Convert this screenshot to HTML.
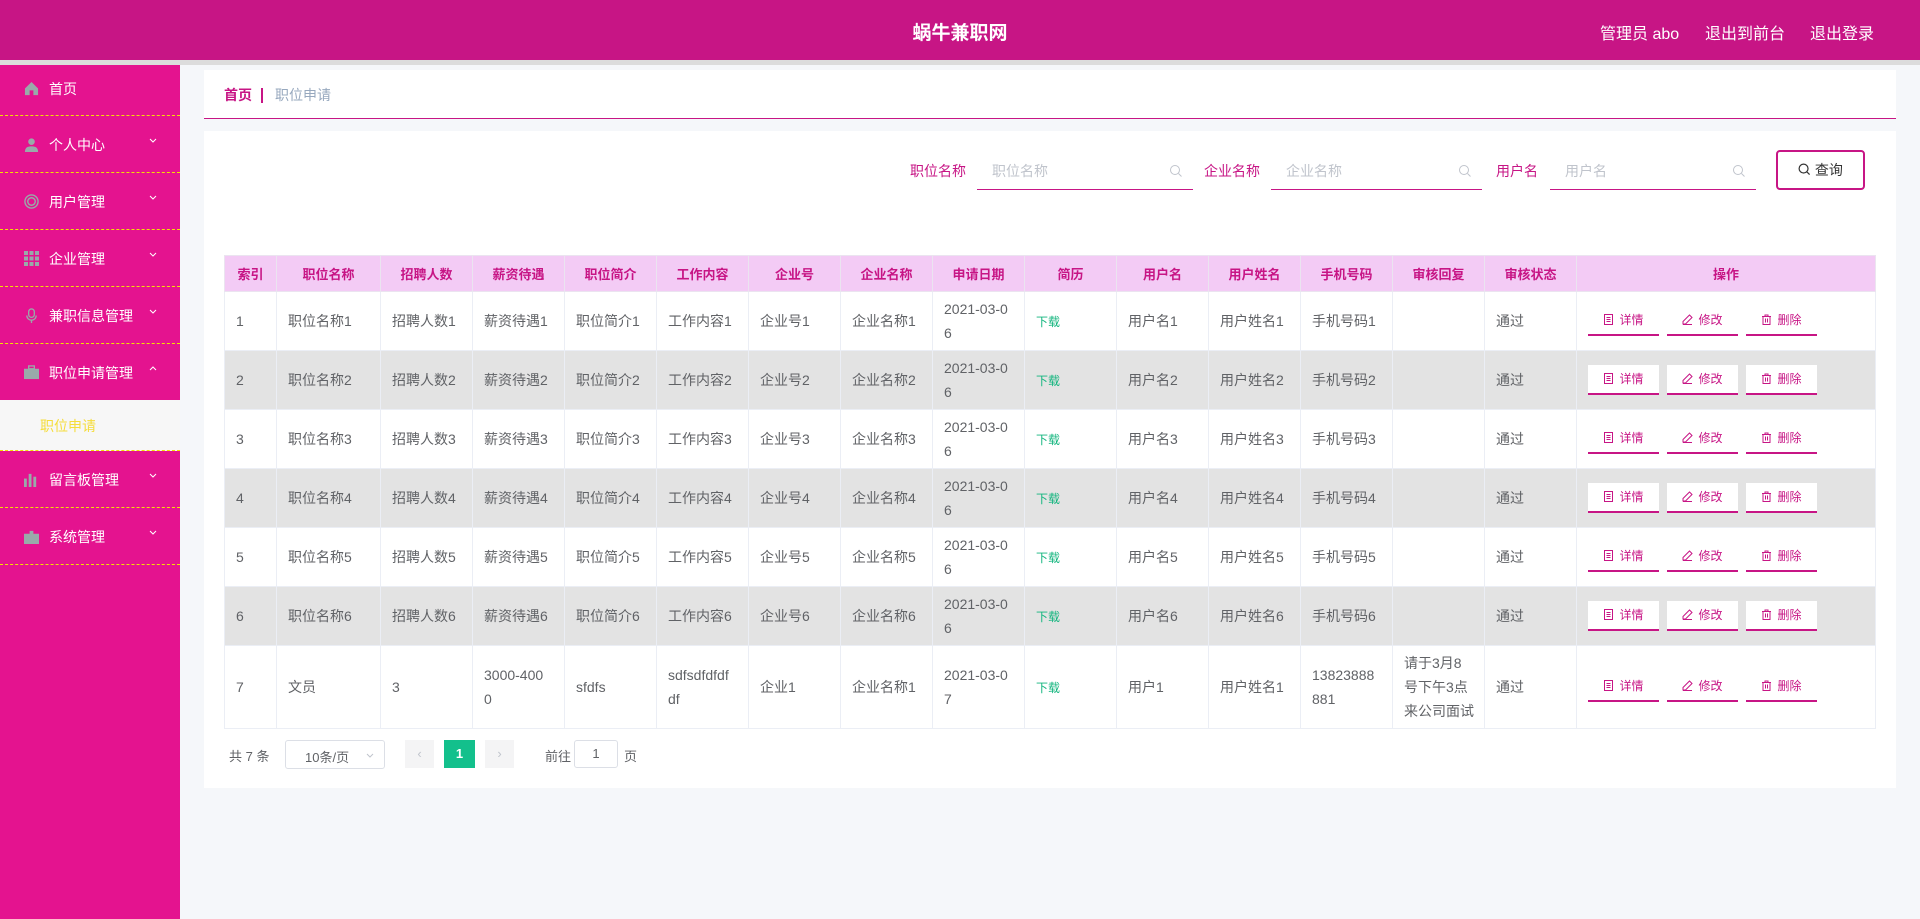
<!DOCTYPE html>
<html><head><meta charset="utf-8">
<style>
*{margin:0;padding:0;box-sizing:border-box}
body{width:1920px;height:919px;overflow:hidden;background:#f5f7fa;font-family:"Liberation Sans","Noto Sans CJK SC",sans-serif;position:relative;color:#606266}
.hdr{position:absolute;left:0;top:0;width:1920px;height:60px;background:#c71585;color:#fff}
.hdr .t{position:absolute;left:0;width:1920px;top:18px;text-align:center;font-size:19px;font-weight:bold}
.hdr .r{position:absolute;top:20px;font-size:16px}
.strip{position:absolute;left:0;top:60px;width:1920px;height:5px;background:#dcdcdc}
.side{position:absolute;left:0;top:65px;width:180px;height:854px;background:#e4138f}
.mi{position:absolute;left:0;width:180px;border-bottom:1px dashed #f5e000;color:#fff;font-size:14px}
.mi .ic{position:absolute;left:24px;width:15px;height:15px}
.mi .tx{position:absolute;left:49px}
.mi .ch{position:absolute;left:149px;width:8px;height:8px}
.sub{position:absolute;left:0;top:400px;width:180px;height:51px;background:#f7f7f7;border-bottom:1px dashed #f5e000;color:#f5dd3c;font-size:14px}
.crumb{position:absolute;left:204px;top:70px;width:1692px;height:49px;background:#fff;border-bottom:1px solid #c71585;font-size:14px}
.card{position:absolute;left:204px;top:131px;width:1692px;height:657px;background:#fff}
.lab{position:absolute;top:161px;font-size:14px;color:#c71585}
.inp{position:absolute;top:152px;height:38px;border-bottom:1px solid #c71585;font-size:14px;color:#c0c4cc;padding:9px 15px}
.inp svg{position:absolute;right:10px;top:12px}
.btn{position:absolute;left:1776px;top:150px;width:89px;height:40px;border:2px solid #c71585;border-radius:4px;font-size:14px;color:#333;text-align:center;line-height:36px}
table{position:absolute;left:224px;top:255px;width:1651px;border-collapse:collapse;table-layout:fixed;font-size:14px}
th{height:36px;background:#f3cbf5;color:#c71585;font-size:13px;font-weight:bold;border:1px solid #ebe4f0;text-align:center;padding:0}
td{border:1px solid #ebeef5;padding:5px 10px 5px 11px;line-height:24px;height:59px;white-space:nowrap;vertical-align:middle}
tr.g td{background:#e3e3e3}
tr.l td{height:82px}
.dl{color:#13b57e;font-size:12px}
.ob{display:inline-block;width:71px;height:30px;background:#fff;border-bottom:2px solid #c71585;color:#c71585;font-size:12px;text-align:center;line-height:28px;margin-right:8px;vertical-align:middle}
.ob svg{vertical-align:-1px;margin-right:5px}
.pg{position:absolute;top:740px;font-size:13px;color:#606266}
</style></head><body>
<div class="hdr"><div class="t">蜗牛兼职网</div>
<div class="r" style="left:1600px">管理员 abo</div>
<div class="r" style="left:1705px">退出到前台</div>
<div class="r" style="left:1810px">退出登录</div></div>
<div class="strip"></div>
<div class="side"></div>
<div class="mi" style="top:65px;height:51px"><svg class="ic" style="top:16px" viewBox="0 0 16 16"><path d="M8 1L1 8v7h5v-5h4v5h5V8z" fill="#9aa"/></svg><span class="tx" style="top:14px">首页</span></div>
<div class="mi" style="top:116px;height:57px"><svg class="ic" style="top:21px" viewBox="0 0 16 16"><circle cx="8" cy="5" r="3.5" fill="#9aa"/><path d="M1 16c0-5 3-6 7-6s7 1 7 6z" fill="#9aa"/></svg><span class="tx" style="top:19px">个人中心</span><svg class="ch" style="top:21px" viewBox="0 0 8 8"><path d="M1 2l3 3 3-3" stroke="#fff" fill="none"/></svg></div>
<div class="mi" style="top:173px;height:57px"><svg class="ic" style="top:21px" viewBox="0 0 16 16"><circle cx="8" cy="8" r="7" stroke="#9aa" stroke-width="1.5" fill="none"/><circle cx="8" cy="8" r="4" stroke="#9aa" stroke-width="1.5" fill="none"/></svg><span class="tx" style="top:19px">用户管理</span><svg class="ch" style="top:21px" viewBox="0 0 8 8"><path d="M1 2l3 3 3-3" stroke="#fff" fill="none"/></svg></div>
<div class="mi" style="top:230px;height:57px"><svg class="ic" style="top:21px" viewBox="0 0 15 15" fill="#9aa"><rect x="0" y="0" width="4" height="4"/><rect x="5.5" y="0" width="4" height="4"/><rect x="11" y="0" width="4" height="4"/><rect x="0" y="5.5" width="4" height="4"/><rect x="5.5" y="5.5" width="4" height="4"/><rect x="11" y="5.5" width="4" height="4"/><rect x="0" y="11" width="4" height="4"/><rect x="5.5" y="11" width="4" height="4"/><rect x="11" y="11" width="4" height="4"/></svg><span class="tx" style="top:19px">企业管理</span><svg class="ch" style="top:21px" viewBox="0 0 8 8"><path d="M1 2l3 3 3-3" stroke="#fff" fill="none"/></svg></div>
<div class="mi" style="top:287px;height:57px"><svg class="ic" style="top:21px" viewBox="0 0 16 16"><rect x="5" y="1" width="6" height="9" rx="3" stroke="#9aa" fill="none" stroke-width="1.4"/><path d="M3 8a5 5 0 0010 0M8 13v3" stroke="#9aa" fill="none" stroke-width="1.4"/></svg><span class="tx" style="top:19px">兼职信息管理</span><svg class="ch" style="top:21px" viewBox="0 0 8 8"><path d="M1 2l3 3 3-3" stroke="#fff" fill="none"/></svg></div>
<div class="mi" style="top:344px;height:56px;border-bottom:none"><svg class="ic" style="top:21px" viewBox="0 0 16 16" fill="#9aa"><rect x="5" y="1" width="6" height="3" fill="none" stroke="#9aa" stroke-width="1.4"/><rect x="0" y="4" width="16" height="11"/></svg><span class="tx" style="top:19px">职位申请管理</span><svg class="ch" style="top:21px" viewBox="0 0 8 8"><path d="M1 5l3-3 3 3" stroke="#fff" fill="none"/></svg></div>
<div class="sub"><span style="position:absolute;left:40px;top:16px">职位申请</span></div>
<div class="mi" style="top:451px;height:57px"><svg class="ic" style="top:21px" viewBox="0 0 16 16" fill="#9aa"><rect x="0" y="7" width="3" height="9"/><rect x="5" y="2" width="3" height="14"/><rect x="10" y="5" width="3" height="11"/></svg><span class="tx" style="top:19px">留言板管理</span><svg class="ch" style="top:21px" viewBox="0 0 8 8"><path d="M1 2l3 3 3-3" stroke="#fff" fill="none"/></svg></div>
<div class="mi" style="top:508px;height:57px"><svg class="ic" style="top:21px" viewBox="0 0 16 16" fill="#9aa"><path d="M0 5h6V2h4v3h6v11H0z"/></svg><span class="tx" style="top:19px">系统管理</span><svg class="ch" style="top:21px" viewBox="0 0 8 8"><path d="M1 2l3 3 3-3" stroke="#fff" fill="none"/></svg></div>

<div class="crumb"><span style="position:absolute;left:20px;top:15px;color:#c71585;font-weight:bold">首页</span><span style="position:absolute;left:57px;top:18px;width:2px;height:15px;background:#c71585"></span><span style="position:absolute;left:71px;top:15px;color:#97a8be">职位申请</span></div>
<div class="card"></div>
<div class="lab" style="left:910px">职位名称</div>
<div class="inp" style="left:977px;width:216px">职位名称<svg width="14" height="14" viewBox="0 0 14 14"><circle cx="6" cy="6" r="4.5" stroke="#c0c4cc" fill="none"/><path d="M9.5 9.5l3 3" stroke="#c0c4cc"/></svg></div>
<div class="lab" style="left:1204px">企业名称</div>
<div class="inp" style="left:1271px;width:211px">企业名称<svg width="14" height="14" viewBox="0 0 14 14"><circle cx="6" cy="6" r="4.5" stroke="#c0c4cc" fill="none"/><path d="M9.5 9.5l3 3" stroke="#c0c4cc"/></svg></div>
<div class="lab" style="left:1496px">用户名</div>
<div class="inp" style="left:1550px;width:206px">用户名<svg width="14" height="14" viewBox="0 0 14 14"><circle cx="6" cy="6" r="4.5" stroke="#c0c4cc" fill="none"/><path d="M9.5 9.5l3 3" stroke="#c0c4cc"/></svg></div>
<div class="btn"><svg width="13" height="13" viewBox="0 0 14 14" style="vertical-align:-1px"><circle cx="6" cy="6" r="4.8" stroke="#333" fill="none" stroke-width="1.3"/><path d="M9.5 9.5l3 3" stroke="#333" stroke-width="1.3"/></svg> 查询</div>

<table>
<colgroup><col style="width:52px"><col style="width:104px"><col style="width:92px"><col style="width:92px"><col style="width:92px"><col style="width:92px"><col style="width:92px"><col style="width:92px"><col style="width:92px"><col style="width:92px"><col style="width:92px"><col style="width:92px"><col style="width:92px"><col style="width:92px"><col style="width:92px"><col style="width:299px"></colgroup>
<tr><th>索引</th><th>职位名称</th><th>招聘人数</th><th>薪资待遇</th><th>职位简介</th><th>工作内容</th><th>企业号</th><th>企业名称</th><th>申请日期</th><th>简历</th><th>用户名</th><th>用户姓名</th><th>手机号码</th><th>审核回复</th><th>审核状态</th><th>操作</th></tr>
<tr><td>1</td><td>职位名称1</td><td>招聘人数1</td><td>薪资待遇1</td><td>职位简介1</td><td>工作内容1</td><td>企业号1</td><td>企业名称1</td><td>2021-03-0<br>6</td><td><span class="dl">下载</span></td><td>用户名1</td><td>用户姓名1</td><td>手机号码1</td><td></td><td>通过</td><td class="op"></td></tr>
<tr class="g"><td>2</td><td>职位名称2</td><td>招聘人数2</td><td>薪资待遇2</td><td>职位简介2</td><td>工作内容2</td><td>企业号2</td><td>企业名称2</td><td>2021-03-0<br>6</td><td><span class="dl">下载</span></td><td>用户名2</td><td>用户姓名2</td><td>手机号码2</td><td></td><td>通过</td><td class="op"></td></tr>
<tr><td>3</td><td>职位名称3</td><td>招聘人数3</td><td>薪资待遇3</td><td>职位简介3</td><td>工作内容3</td><td>企业号3</td><td>企业名称3</td><td>2021-03-0<br>6</td><td><span class="dl">下载</span></td><td>用户名3</td><td>用户姓名3</td><td>手机号码3</td><td></td><td>通过</td><td class="op"></td></tr>
<tr class="g"><td>4</td><td>职位名称4</td><td>招聘人数4</td><td>薪资待遇4</td><td>职位简介4</td><td>工作内容4</td><td>企业号4</td><td>企业名称4</td><td>2021-03-0<br>6</td><td><span class="dl">下载</span></td><td>用户名4</td><td>用户姓名4</td><td>手机号码4</td><td></td><td>通过</td><td class="op"></td></tr>
<tr><td>5</td><td>职位名称5</td><td>招聘人数5</td><td>薪资待遇5</td><td>职位简介5</td><td>工作内容5</td><td>企业号5</td><td>企业名称5</td><td>2021-03-0<br>6</td><td><span class="dl">下载</span></td><td>用户名5</td><td>用户姓名5</td><td>手机号码5</td><td></td><td>通过</td><td class="op"></td></tr>
<tr class="g"><td>6</td><td>职位名称6</td><td>招聘人数6</td><td>薪资待遇6</td><td>职位简介6</td><td>工作内容6</td><td>企业号6</td><td>企业名称6</td><td>2021-03-0<br>6</td><td><span class="dl">下载</span></td><td>用户名6</td><td>用户姓名6</td><td>手机号码6</td><td></td><td>通过</td><td class="op"></td></tr>
<tr class="l"><td>7</td><td>文员</td><td>3</td><td>3000-400<br>0</td><td>sfdfs</td><td>sdfsdfdfdf<br>df</td><td>企业1</td><td>企业名称1</td><td>2021-03-0<br>7</td><td><span class="dl">下载</span></td><td>用户1</td><td>用户姓名1</td><td>13823888<br>881</td><td>请于3月8<br>号下午3点<br>来公司面试</td><td>通过</td><td class="op"></td></tr>
</table>

<div class="pg" style="left:229px;top:746px">共 7 条</div>
<div class="pg" style="left:285px;top:740px;width:100px;height:29px;border:1px solid #dcdfe6;border-radius:3px;padding:6px 0 0 19px">10条/页<svg width="8" height="8" viewBox="0 0 8 8" style="position:absolute;right:10px;top:11px"><path d="M1 2l3 3 3-3" stroke="#c0c4cc" fill="none"/></svg></div>
<div class="pg" style="left:405px;top:740px;width:29px;height:28px;background:#f4f4f5;text-align:center;line-height:28px;color:#c0c4cc">‹</div>
<div class="pg" style="left:444px;top:740px;width:31px;height:28px;background:#13c08c;text-align:center;line-height:28px;color:#fff;font-weight:bold">1</div>
<div class="pg" style="left:485px;top:740px;width:29px;height:28px;background:#f4f4f5;text-align:center;line-height:28px;color:#c0c4cc">›</div>
<div class="pg" style="left:545px;top:746px">前往</div>
<div class="pg" style="left:574px;top:740px;width:44px;height:28px;border:1px solid #dcdfe6;border-radius:3px;text-align:center;line-height:26px">1</div>
<div class="pg" style="left:624px;top:746px">页</div>
<script>
var h='<span class="ob"><svg width="11" height="11" viewBox="0 0 11 11"><rect x="1.5" y="0.5" width="8" height="10" stroke="#c71585" fill="none"/><path d="M3.5 3.5h4M3.5 5.5h4M3.5 7.5h4" stroke="#c71585"/></svg>详情</span><span class="ob"><svg width="11" height="11" viewBox="0 0 11 11"><path d="M7.5 1l2.5 2.5L3.5 10H1V7.5zM1 10.5h9" stroke="#c71585" fill="none"/></svg>修改</span><span class="ob"><svg width="11" height="11" viewBox="0 0 11 11"><path d="M1 2.5h9M4 2.5V1h3v1.5M2 2.5v8h7v-8M4.5 4.5v4M6.5 4.5v4" stroke="#c71585" fill="none"/></svg>删除</span>';
document.querySelectorAll('.op').forEach(function(t){t.innerHTML=h});
</script>
</body></html>
